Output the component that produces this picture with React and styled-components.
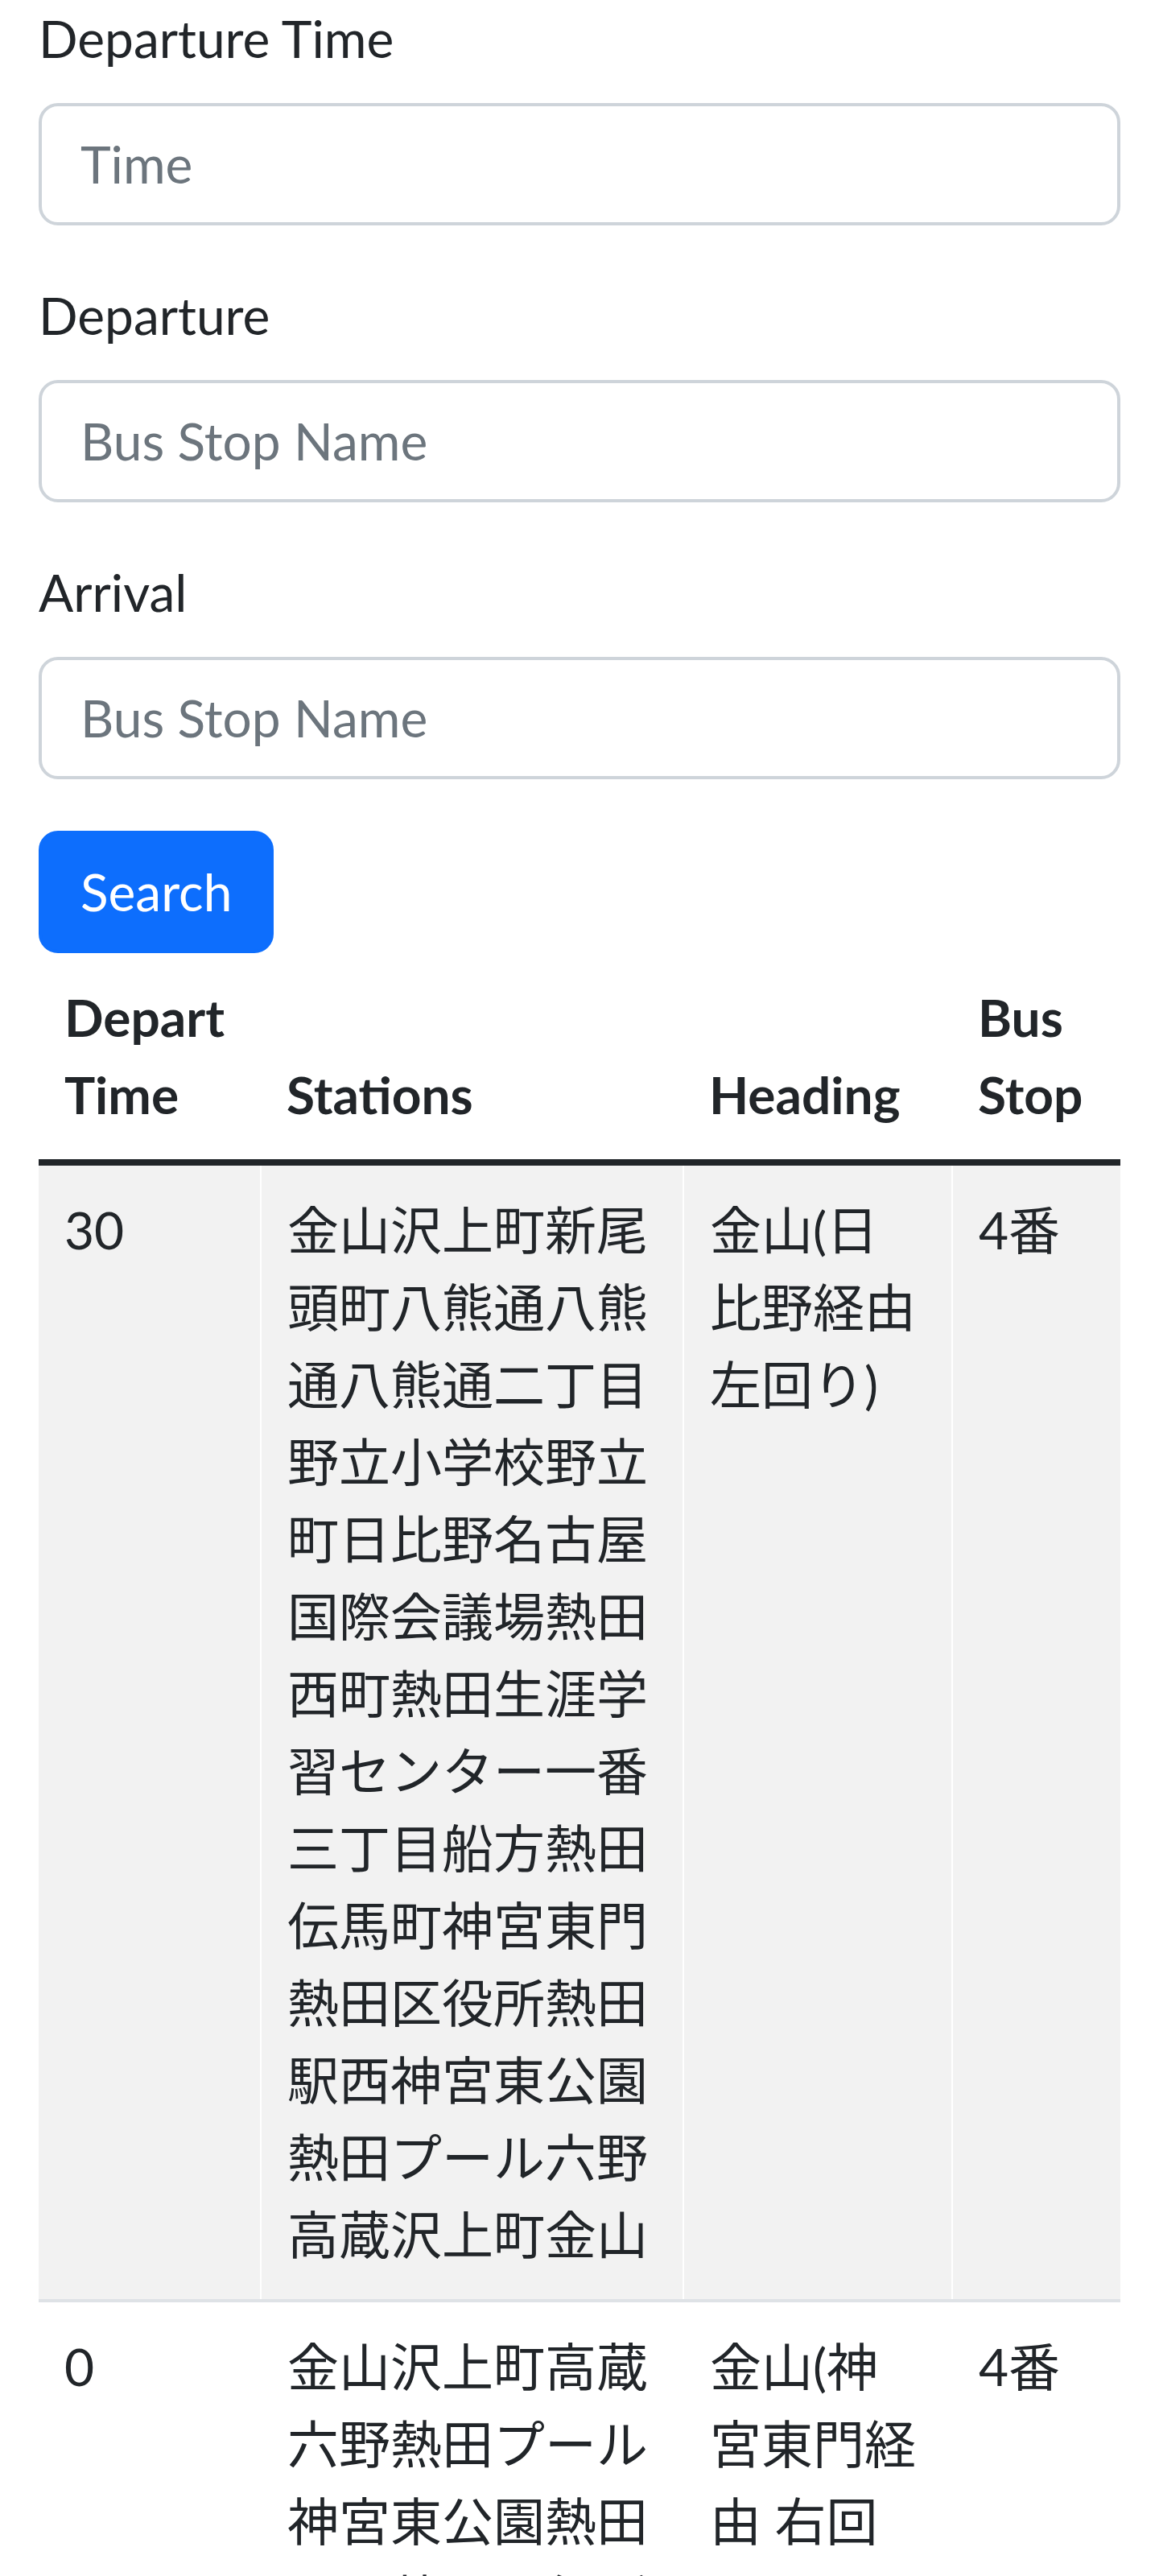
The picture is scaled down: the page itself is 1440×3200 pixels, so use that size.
import React from 'react';
import styled, { createGlobalStyle } from 'styled-components';

const GlobalStyle = createGlobalStyle`
  * { box-sizing: border-box; }
  body {
    margin: 0;
    background: #fff;
    color: #212529;
    font-family: "Lato", "Noto Sans CJK JP", sans-serif;
    font-size: 64px;
    line-height: 1.5;
  }
`

const Container = styled.div`
  padding: 0 48px;
`

const FieldGroup = styled.div`
  margin-bottom: 64px;
`

const Label = styled.label`
  display: block;
  margin-bottom: 32px;
`

const Input = styled.input`
  display: block;
  width: 100%;
  padding: 24px 48px;
  font-family: inherit;
  font-size: 64px;
  line-height: 1.5;
  color: #212529;
  background: #fff;
  border: 4px solid #ced4da;
  border-radius: 24px;
  outline: none;

  &::placeholder {
    color: #6c757d;
  }
`

const Button = styled.button`
  display: inline-block;
  padding: 24px 48px;
  font-family: inherit;
  font-size: 64px;
  line-height: 1.5;
  color: #fff;
  background: #0d6efd;
  border: 4px solid #0d6efd;
  border-radius: 24px;
  vertical-align: top;
`

const Table = styled.table`
  width: 100%;
  border-collapse: collapse;
  table-layout: fixed;
  vertical-align: top;
`

const Col = styled.col`
  width: ${({ w }) => w}px;
`

const Th = styled.th`
  padding: 32px;
  text-align: left;
  vertical-align: bottom;
  font-weight: 700;
  border-bottom: 4px solid #dee2e6;
`

const Body = styled.tbody`
  border-top: 8px solid #212529;
`

const Row = styled.tr`
  background: ${({ striped }) => striped ? '#f2f2f2' : '#fff'};
  border-bottom: 4px solid #dee2e6;
`

const Td = styled.td`
  padding: 32px;
  vertical-align: top;
  word-break: break-all;

  & + & {
    border-left: 2px solid #fff;
  }
`

const rows = [
    {
        time: '30',
        stations: '金山沢上町新尾頭町八熊通八熊通八熊通二丁目野立小学校野立町日比野名古屋国際会議場熱田西町熱田生涯学習センター一番三丁目船方熱田伝馬町神宮東門熱田区役所熱田駅西神宮東公園熱田プール六野高蔵沢上町金山',
        heading: '金山(日比野経由左回り)',
        stop: '4番',
    },
    {
        time: '0',
        stations: '金山沢上町高蔵六野熱田プール神宮東公園熱田駅西熱田区役所熱田伝馬町神宮東門船方熱田三丁目一番熱田生涯学習センター熱田西町名古屋国際会議場日比野野立町野立小学校八熊通二丁目八熊通八熊通新尾頭町沢上町金山',
        heading: '金山(神宮東門経由 右回り)',
        stop: '4番',
    },
];

const App = () => {
    return (
        <Container>
            <GlobalStyle />
            <FieldGroup>
                <Label>Departure Time</Label>
                <Input placeholder="Time" />
            </FieldGroup>
            <FieldGroup>
                <Label>Departure</Label>
                <Input placeholder="Bus Stop Name" />
            </FieldGroup>
            <FieldGroup>
                <Label>Arrival</Label>
                <Input placeholder="Bus Stop Name" />
            </FieldGroup>
            <Button>Search</Button>
            <Table>
                <colgroup>
                    <Col w={276} />
                    <Col w={525} />
                    <Col w={334} />
                    <Col w={209} />
                </colgroup>
                <thead>
                    <tr>
                        <Th>Depart Time</Th>
                        <Th>Stations</Th>
                        <Th>Heading</Th>
                        <Th>Bus Stop</Th>
                    </tr>
                </thead>
                <Body>
                {rows.map((row, i) => (
                    <Row key={i} striped={i % 2 === 0}>
                        <Td>{row.time}</Td>
                        <Td>{row.stations}</Td>
                        <Td>{row.heading}</Td>
                        <Td>{row.stop}</Td>
                    </Row>
                ))}
                </Body>
            </Table>
        </Container>
    )
}

export default App;
